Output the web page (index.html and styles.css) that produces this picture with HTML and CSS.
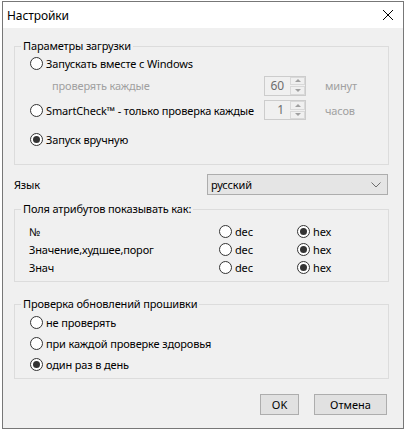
FILE: index.html
```html
<!DOCTYPE html>
<html lang="ru">
<head>
<meta charset="utf-8">
<title>Настройки</title>
<link rel="stylesheet" href="styles.css">
</head>
<body>
<div class="window">
  <div class="titlebar">
    <span class="title">Настройки</span>
    <svg class="close" width="12" height="12" viewBox="0 0 12 12"><path d="M1 1 L11 11 M11 1 L1 11" stroke="#000" stroke-width="1" fill="none"/></svg>
  </div>
  <div class="content">
    <fieldset class="group">
      <legend>Параметры загрузки</legend>
      <div class="boot">
        <label class="radio full r1"><span class="rb"></span>Запускать вместе с Windows</label>
        <span class="disabled indent r2">проверять каждые</span>
        <div class="spin r2"><span class="val">60</span><span class="arrows"><span class="up"></span><span class="down"></span></span></div>
        <span class="unit r2">минут</span>
        <label class="radio r3"><span class="rb"></span>SmartCheck™ - только проверка каждые</label>
        <div class="spin r3"><span class="val">1</span><span class="arrows"><span class="up"></span><span class="down"></span></span></div>
        <span class="unit r3">часов</span>
        <label class="radio full r4"><span class="rb checked"></span>Запуск вручную</label>
      </div>
    </fieldset>

    <div class="lang">
      <span>Язык</span>
      <div class="select">
        <span>русский</span>
        <svg width="10" height="6" viewBox="0 0 10 6"><path d="M0.5 0.5 L5 5 L9.5 0.5" stroke="#6d6d6d" stroke-width="1" fill="none"/></svg>
      </div>
    </div>

    <fieldset class="group g2">
      <legend>Поля атрибутов показывать как:</legend>
      <div class="attrs">
        <span>№</span>
        <label class="radio"><span class="rb"></span>dec</label>
        <label class="radio"><span class="rb checked"></span>hex</label>
        <span>Значение,худшее,порог</span>
        <label class="radio"><span class="rb"></span>dec</label>
        <label class="radio"><span class="rb checked"></span>hex</label>
        <span>Знач</span>
        <label class="radio"><span class="rb"></span>dec</label>
        <label class="radio"><span class="rb checked"></span>hex</label>
      </div>
    </fieldset>

    <fieldset class="group g3">
      <legend>Проверка обновлений прошивки</legend>
      <div class="fw">
        <label class="radio"><span class="rb"></span>не проверять</label>
        <label class="radio"><span class="rb"></span>при каждой проверке здоровья</label>
        <label class="radio"><span class="rb checked"></span>один раз в день</label>
      </div>
    </fieldset>

    <div class="buttons">
      <button class="btn ok">OK</button>
      <button class="btn cancel">Отмена</button>
    </div>
  </div>
</div>
</body>
</html>
```

FILE: styles.css
```css
* { box-sizing: border-box; }
html, body {
  margin: 0;
  padding: 0;
  background: #ffffff;
}
body {
  font-family: "Noto Sans", "Open Sans", sans-serif;
  font-size: 11px;
  letter-spacing: -0.15px;
  color: #000;
  padding: 1px 0 0 2px;
}
.window {
  width: 402px;
  border: 1px solid #777;
  background: #f0f0f0;
}
.titlebar {
  height: 26px;
  background: #fff;
  display: flex;
  align-items: center;
  justify-content: space-between;
  padding: 0 9px 0 4px;
}
.title {
  font-size: 12px;
  letter-spacing: -0.1px;
  line-height: 16px;
  margin-top: 1px;
}
.close { display: block; }
.content {
  padding: 10px 14px 13px 11px;
}
.group {
  margin: 0;
  padding: 0;
  border: 1px solid #dcdcdc;
  min-width: 0;
}
.group legend {
  margin-left: 6px;
  padding: 0 2px;
  line-height: 16px;
}
.radio {
  display: flex;
  align-items: center;
  white-space: nowrap;
}
.rb {
  width: 13px;
  height: 13px;
  border: 1px solid #333;
  border-radius: 50%;
  background: #fff;
  margin-right: 3px;
  flex: none;
  display: flex;
  align-items: center;
  justify-content: center;
}
.rb.checked::after {
  content: "";
  width: 7px;
  height: 7px;
  border-radius: 50%;
  background: #333;
}
.boot {
  display: grid;
  grid-template-columns: 234px 42px auto;
  grid-template-rows: 19px 25px 24px 34px;
  padding: 0 0 8px 15px;
  align-items: center;
}
.boot .full { grid-column: 1 / 4; }
.boot .r1 { grid-row: 1; }
.boot .r2 { grid-row: 2; }
.boot .r3 { grid-row: 3; }
.boot .r4 { grid-row: 4; }
.disabled { color: #a0a0a0; }
.indent { padding-left: 22px; }
.unit {
  color: #a0a0a0;
  margin-left: 19px;
}
.spin {
  width: 42px;
  height: 20px;
  border: 1px solid #cccccc;
  display: flex;
  background: #f0f0f0;
}
.spin .val {
  flex: 1;
  text-align: right;
  padding-right: 6px;
  line-height: 18px;
  color: #6d6d6d;
  font-size: 12px;
}
.spin .arrows {
  width: 15px;
  display: flex;
  flex-direction: column;
  gap: 1px;
}
.spin .up, .spin .down {
  flex: 1;
  border: 1px solid #d9d9d9;
  background: #f0f0f0;
  display: flex;
  align-items: center;
  justify-content: center;
}
.spin .up::after {
  content: "";
  border-left: 3px solid transparent;
  border-right: 3px solid transparent;
  border-bottom: 3px solid #a0a0a0;
}
.spin .down::after {
  content: "";
  border-left: 3px solid transparent;
  border-right: 3px solid transparent;
  border-top: 3px solid #a0a0a0;
}
.lang {
  display: grid;
  grid-template-columns: 193px 181px;
  align-items: center;
  margin-top: 9px;
}
.select {
  height: 21px;
  border: 1px solid #adadad;
  background: #e5e5e5;
  display: flex;
  align-items: center;
  justify-content: space-between;
  padding: 0 6px 0 3px;
}
.g2 { margin-top: 6px; }
.attrs {
  display: grid;
  grid-template-columns: 190px 78px auto;
  grid-auto-rows: 18px;
  align-items: center;
  padding: 5px 0 5px 14px;
}
.g3 { margin-top: 14px; }
.fw {
  display: grid;
  grid-auto-rows: 21px;
  align-items: center;
  padding: 0 0 3px 15px;
}
.buttons {
  display: flex;
  justify-content: flex-end;
  gap: 15px;
  margin-top: 15px;
  padding-right: 2px;
}
.btn {
  height: 21px;
  border: 1px solid #adadad;
  background: #e1e1e1;
  font: inherit;
  color: #000;
  padding: 0;
  line-height: 19px;
}
.btn.ok { width: 39px; }
.btn.cancel { width: 73px; }
```
